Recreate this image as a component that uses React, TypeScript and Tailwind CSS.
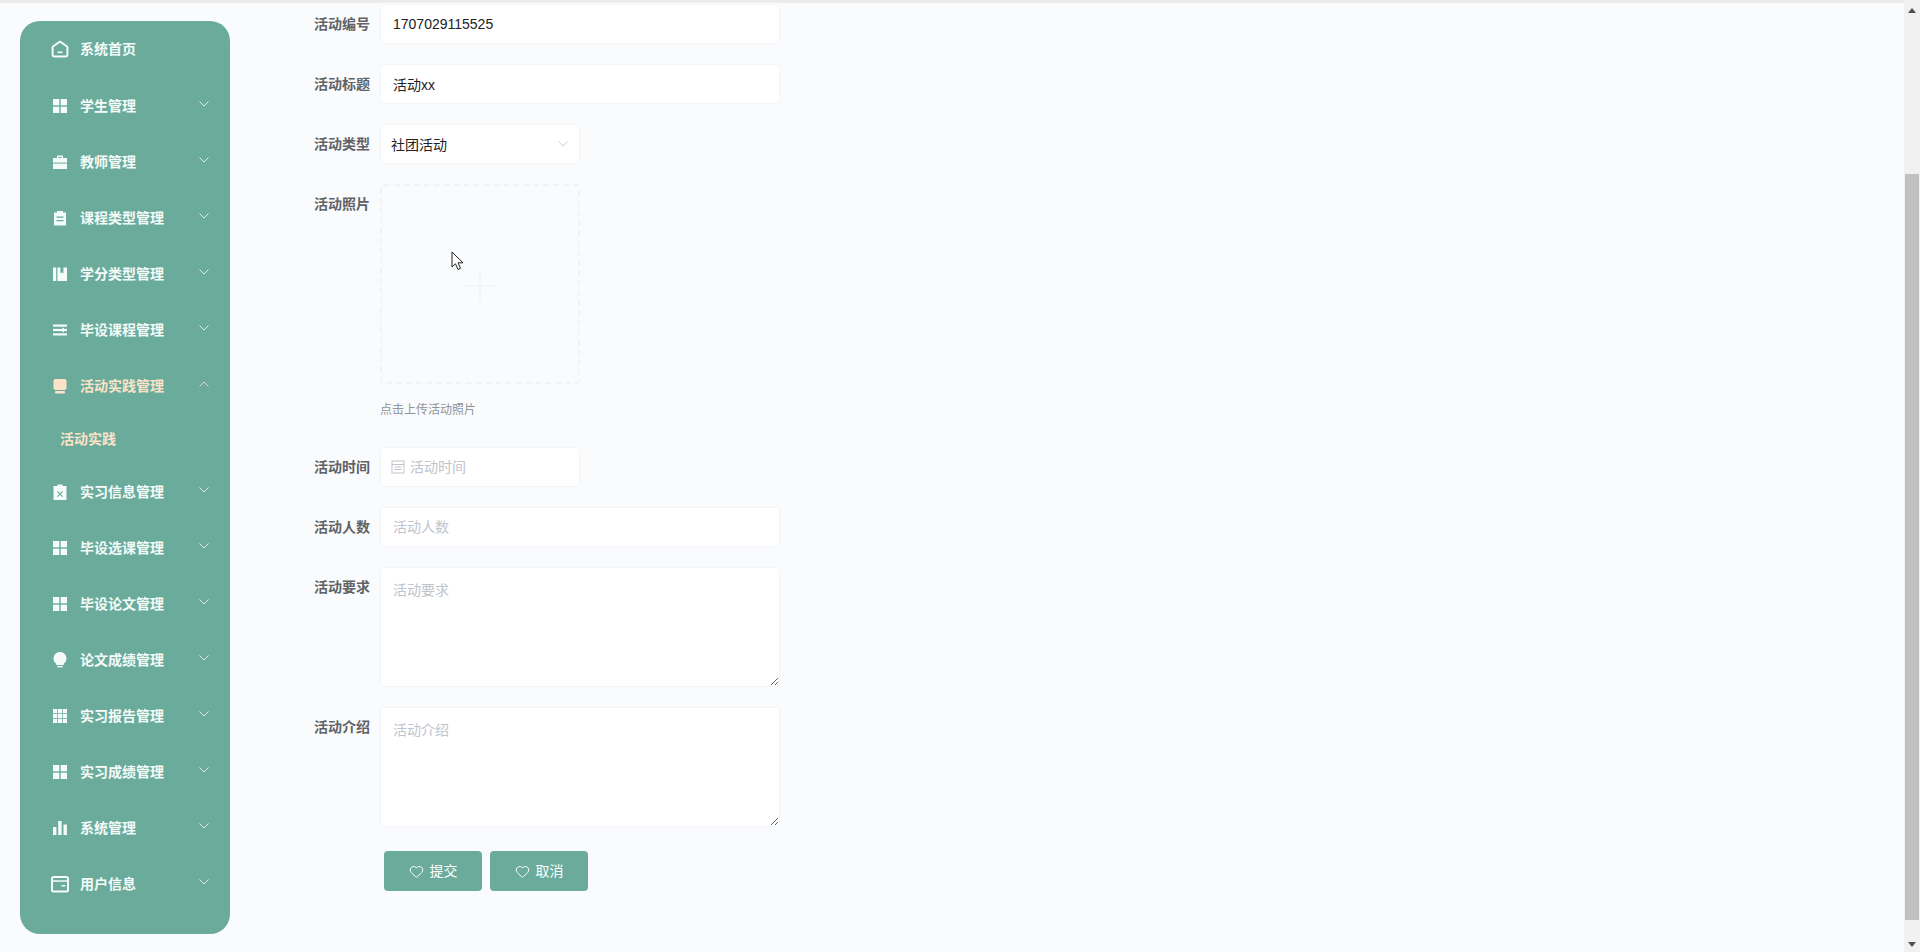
import { ReactNode } from "react";
import { Heart } from "lucide-react";

const Svg = ({ children, w = 18 }: { children: ReactNode; w?: number }) => (
    <svg width={w} height={18} viewBox="0 0 18 18" fill="currentColor" className="shrink-0">
        {children}
    </svg>
);

const HomeIcon = () => (
    <Svg>
        <path d="M9 1.500 16 6.500a1 1 0 0 1 .4.8V15a1.800 1.800 0 0 1-1.800 1.500H3.400A1.800 1.800 0 0 1 1.600 15V7.300a1 1 0 0 1 .4-.8Z" fill="none" stroke="currentColor" strokeWidth="2" strokeLinejoin="round" />
        <rect x="6.500" y="11.500" width="5" height="1.600" />
    </Svg>
);
const GridIcon = () => (
    <Svg>
        <rect x="2" y="2" width="6.300" height="6.300" />
        <rect x="9.700" y="2" width="6.300" height="6.300" />
        <rect x="2" y="9.700" width="6.300" height="6.300" />
        <rect x="9.700" y="9.700" width="6.300" height="6.300" />
    </Svg>
);
const CaseIcon = () => (
    <Svg>
        <path d="M6 5V2.600h6V5h-1.400V3.900H7.400V5Z" />
        <rect x="2" y="5" width="14" height="4.600" />
        <rect x="2" y="10.600" width="14" height="5.400" />
    </Svg>
);
const ClipIcon = () => (
    <Svg>
        <path fillRule="evenodd" d="M6 2h6v1.500h3V16.500H3V3.500h3ZM5.500 7.500v1.300h7V7.500Zm0 3.500v1.300h7V11Z" />
    </Svg>
);
const BookIcon = () => (
    <Svg>
        <rect x="2" y="2.500" width="3.200" height="13.500" />
        <path d="M6.400 2.500h3v6l1.500-1.200 1.500 1.200v-6H16V16H6.400Z" />
    </Svg>
);
const LinesIcon = () => (
    <Svg>
        <rect x="2" y="3.500" width="14" height="2.200" />
        <rect x="2" y="7.900" width="14" height="2.200" />
        <rect x="2" y="12.300" width="14" height="2.200" />
        <rect x="11.500" y="6.800" width="1.500" height="4.400" />
    </Svg>
);
const OrderIcon = () => (
    <Svg>
        <path d="M4.500 2h9A2 2 0 0 1 15.500 4v7a2 2 0 0 1-2 2h-9A2 2 0 0 1 2.500 11V4a2 2 0 0 1 2-2Z" />
        <rect x="4" y="14" width="10" height="2.400" rx="1" />
    </Svg>
);
const ReleaseIcon = () => (
    <Svg>
        <path fillRule="evenodd" d="M6.500 1.500h5v1.500H15.500V17h-13V3h4ZM6.800 8l-.8.800L8.200 11 6 13.200l.8.800L9 11.800 11.200 14l.8-.8L9.800 11 12 8.800l-.8-.8L9 10.200Z" />
    </Svg>
);
const BulbIcon = () => (
    <Svg>
        <path d="M9 1a6.500 6.500 0 0 1 3.700 11.800V14H5.300v-1.200A6.500 6.500 0 0 1 9 1Z" />
        <rect x="6.200" y="15" width="5.600" height="1.300" />
    </Svg>
);
const TableIcon = () => (
    <Svg>
        <rect x="2" y="2" width="4.200" height="4.200" />
        <rect x="6.900" y="2" width="4.200" height="4.200" />
        <rect x="11.800" y="2" width="4.200" height="4.200" />
        <rect x="2" y="6.900" width="4.200" height="4.200" />
        <rect x="6.900" y="6.900" width="4.200" height="4.200" />
        <rect x="11.800" y="6.900" width="4.200" height="4.200" />
        <rect x="2" y="11.800" width="4.200" height="4.200" />
        <rect x="6.900" y="11.800" width="4.200" height="4.200" />
        <rect x="11.800" y="11.800" width="4.200" height="4.200" />
    </Svg>
);
const ChartIcon = () => (
    <Svg>
        <rect x="2" y="8" width="3.400" height="8" />
        <rect x="7.200" y="2" width="3.400" height="14" />
        <rect x="12.500" y="5.500" width="3.400" height="10.500" />
    </Svg>
);
const CardIcon = () => (
    <Svg>
        <rect x="1" y="2" width="16" height="14.500" rx="1.500" fill="none" stroke="currentColor" strokeWidth="2" />
        <rect x="1.500" y="5.300" width="15" height="1.500" />
        <rect x="10.500" y="10" width="4" height="1.500" />
    </Svg>
);

type MenuItem = { name: string; icon: ReactNode; arrow?: boolean; active?: boolean };

const before: MenuItem[] = [
    { name: "系统首页", icon: <HomeIcon />, arrow: false },
    { name: "学生管理", icon: <GridIcon /> },
    { name: "教师管理", icon: <CaseIcon /> },
    { name: "课程类型管理", icon: <ClipIcon /> },
    { name: "学分类型管理", icon: <BookIcon /> },
    { name: "毕设课程管理", icon: <LinesIcon /> },
    { name: "活动实践管理", icon: <OrderIcon />, active: true },
];

const after: MenuItem[] = [
    { name: "实习信息管理", icon: <ReleaseIcon /> },
    { name: "毕设选课管理", icon: <GridIcon /> },
    { name: "毕设论文管理", icon: <GridIcon /> },
    { name: "论文成绩管理", icon: <BulbIcon /> },
    { name: "实习报告管理", icon: <TableIcon /> },
    { name: "实习成绩管理", icon: <GridIcon /> },
    { name: "系统管理", icon: <ChartIcon /> },
    { name: "用户信息", icon: <CardIcon /> },
];

const MenuRow = ({ item }: { item: MenuItem }) => (
    <div className={`flex h-14 items-center pr-5 pl-[31px] text-sm font-bold first:mb-px ${item.active ? "text-[#fbe3c8]" : "text-[#f4fbf8]"}`}>
        {item.icon}
        <span className="ml-[11px]">{item.name}</span>
        {item.arrow !== false && (
            <svg width="12" height="8" viewBox="0 0 12 8" fill="none" stroke="currentColor" strokeWidth="1" className="mb-[5px] ml-auto opacity-80">
                <path d={item.active ? "M1.500 6.500 6 2l4.500 4.500" : "M1.500 1.500 6 6l4.500-4.500"} />
            </svg>
        )}
    </div>
);

const Field = ({ label, children }: { label: string; children: ReactNode }) => (
    <div className="mb-5 flex">
        <label className="mr-[10px] h-10 w-20 text-right text-sm leading-10 font-bold text-[#606266]">{label}</label>
        {children}
    </div>
);

const boxCls = "rounded-[4px] border border-[#f3f5f8] bg-white text-sm text-[#222] outline-none placeholder:text-[#c0c4cc]";

export default function App() {
    return (
        <div className="relative flex h-[952px] w-[1920px] flex-col overflow-hidden bg-[#f9fbfd] font-['Liberation_Sans','Noto_Sans_CJK_SC',sans-serif]">
            <div className="h-[3px] shrink-0 bg-[#ececec]"></div>
            <div className="flex min-h-0 flex-1">
                {/* sidebar */}
                <aside className="mt-[18px] ml-5 h-[913px] w-[210px] shrink-0 rounded-[20px] bg-[#6aab9c]">
                    {before.map((item) => (
                        <MenuRow key={item.name} item={item} />
                    ))}
                    <div className="flex h-[50px] items-center pb-px pl-10 text-sm font-bold text-[#fbe3c8]">活动实践</div>
                    {after.map((item) => (
                        <MenuRow key={item.name} item={item} />
                    ))}
                </aside>

                {/* form */}
                <main className="ml-[60px] flex-1 pt-px">
                    <Field label="活动编号">
                        <input readOnly value="1707029115525" className={`${boxCls} h-10 w-[400px] px-3`} />
                    </Field>
                    <Field label="活动标题">
                        <input readOnly value="活动xx" className={`${boxCls} h-10 w-[400px] px-3`} />
                    </Field>
                    <Field label="活动类型">
                        <div className={`${boxCls} flex h-10 w-[200px] items-center justify-between px-[10px]`}>
                            <span className="mt-px">社团活动</span>
                            <svg width="12" height="8" viewBox="0 0 12 8" fill="none" stroke="#c8ccd4" strokeWidth="1">
                                <path d="M1.500 1.500 6 6l4.500-4.500" />
                            </svg>
                        </div>
                    </Field>
                    <div className="flex">
                        <label className="mr-[10px] h-10 w-20 text-right text-sm leading-10 font-bold text-[#606266]">活动照片</label>
                        <div>
                            <div className="flex h-[200px] w-[200px] items-center justify-center rounded-[4px] border-2 border-dashed border-[#f1f3f6]">
                                <svg width="32" height="32" viewBox="0 0 32 32" stroke="#f1f3f6" strokeWidth="1.500" fill="none" className="mt-[3px]">
                                    <path d="M0 16h32M16 0v32" />
                                </svg>
                            </div>
                            <div className="h-8 pt-[10px] text-xs leading-8 text-[#909399]">点击上传活动照片</div>
                        </div>
                    </div>
                    <div className="mt-[31px]">
                        <Field label="活动时间">
                            <div className={`${boxCls} flex h-10 w-[200px] items-center pl-[10px]`}>
                                <svg width="14" height="14" viewBox="0 0 14 14" fill="none" stroke="#c0c4cc" strokeWidth="1" className="mb-px shrink-0">
                                    <rect x="1" y="1" width="12" height="12" />
                                    <path d="M1 4.500h12M3.500 7h7M3.500 9.500h7" />
                                </svg>
                                <span className="ml-[5px] text-[#c0c4cc]">活动时间</span>
                            </div>
                        </Field>
                    </div>
                    <Field label="活动人数">
                        <input readOnly placeholder="活动人数" className={`${boxCls} h-10 w-[400px] px-3`} />
                    </Field>
                    <Field label="活动要求">
                        <textarea readOnly placeholder="活动要求" className={`${boxCls} h-[120px] w-[400px] px-3 py-[10px] leading-6`} />
                    </Field>
                    <Field label="活动介绍">
                        <textarea readOnly placeholder="活动介绍" className={`${boxCls} h-[120px] w-[400px] px-3 py-[10px] leading-6`} />
                    </Field>
                    <div className="mt-6 ml-[94px] flex gap-2">
                        {["提交", "取消"].map((text) => (
                            <button key={text} className="flex h-10 w-[98px] items-center justify-center gap-[6px] rounded-[4px] bg-[#6aab9c] text-sm text-white">
                                <Heart size={15} strokeWidth={1.6} />
                                {text}
                            </button>
                        ))}
                    </div>
                </main>

                {/* scrollbar */}
                <div className="-mt-[3px] flex w-4 shrink-0 flex-col items-center bg-[#f1f1f1]">
                    <svg width="8" height="5" viewBox="0 0 8 5" fill="#505050" className="mt-2">
                        <path d="M4 0 8 5H0Z" />
                    </svg>
                    <div className="mt-[161px] h-[746px] w-[14px] bg-[#c1c1c1]"></div>
                    <svg width="8" height="5" viewBox="0 0 8 5" fill="#505050" className="mt-[22px]">
                        <path d="M0 0H8L4 5Z" />
                    </svg>
                </div>
            </div>

            {/* mouse pointer caught in the screenshot */}
            <svg width="14" height="20" viewBox="0 0 14 20" className="absolute top-[251px] left-[451px]" fill="white" stroke="#222" strokeWidth="1">
                <path d="M1 1v15l3.500-3.200L7 18.500l2.500-1.200L7 11.800h5Z" />
            </svg>
        </div>
    );
}
